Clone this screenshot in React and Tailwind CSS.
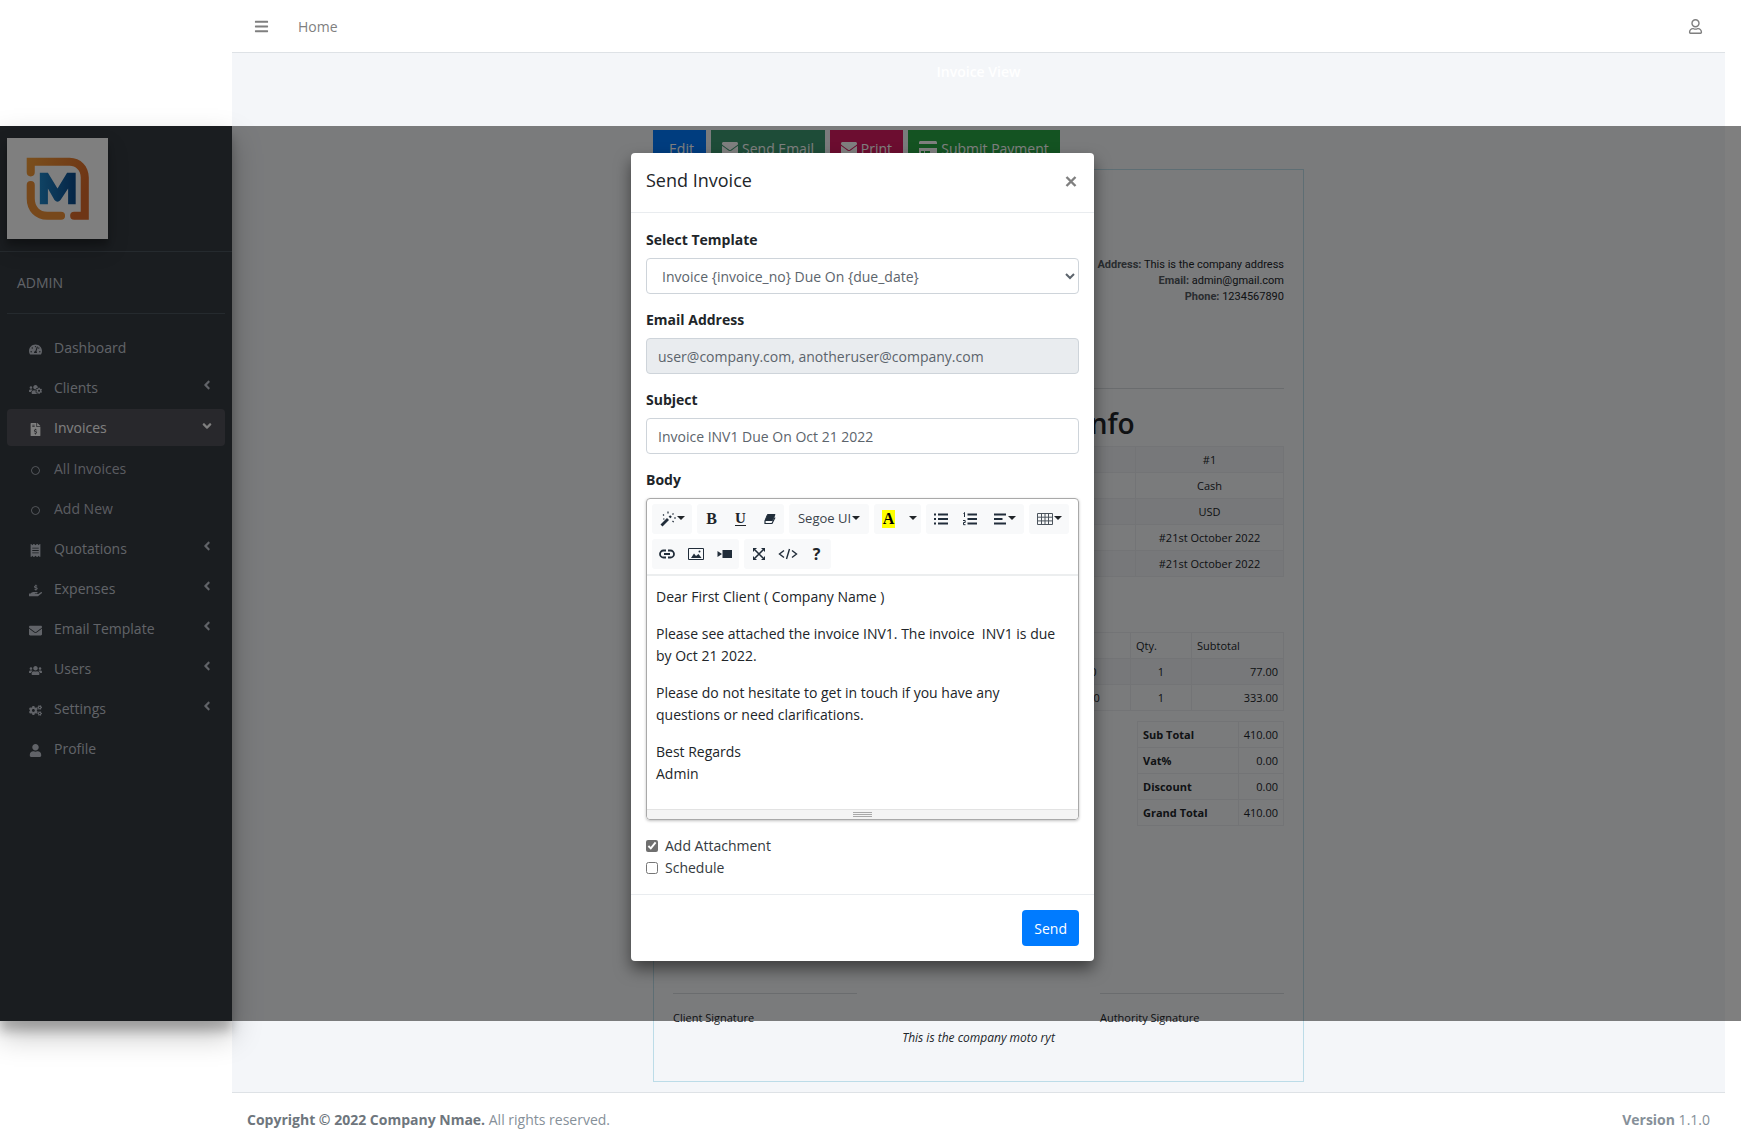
import React from "react";
import {
  FaTachometerAlt,
  FaUsersCog,
  FaFileInvoiceDollar,
  FaReceipt,
  FaHandHoldingUsd,
  FaEnvelope,
  FaUsers,
  FaCogs,
  FaUser,
  FaAngleLeft,
  FaAngleDown,
  FaBars,
  FaRegUser,
  FaRegCircle,
  FaCreditCard,
} from "react-icons/fa";

const NAV = [
  { label: "Dashboard", Icon: FaTachometerAlt },
  { label: "Clients", Icon: FaUsersCog, more: true },
  { label: "Invoices", Icon: FaFileInvoiceDollar, active: true },
  { label: "All Invoices", Icon: FaRegCircle, sub: true },
  { label: "Add New", Icon: FaRegCircle, sub: true },
  { label: "Quotations", Icon: FaReceipt, more: true },
  { label: "Expenses", Icon: FaHandHoldingUsd, more: true },
  { label: "Email Template", Icon: FaEnvelope, more: true },
  { label: "Users", Icon: FaUsers, more: true },
  { label: "Settings", Icon: FaCogs, more: true },
  { label: "Profile", Icon: FaUser },
];

function Logo() {
  return (
    <svg viewBox="0 0 100 100" className="size-[101px] bg-white shadow-[0_10px_20px_rgba(0,0,0,0.19),0_6px_6px_rgba(0,0,0,0.23)]" role="img" aria-label="Company logo">
      <defs>
        <linearGradient id="ring" x1="0" x2="1" y1="0" y2="0.4">
          <stop offset="0" stopColor="#f5a03a" />
          <stop offset="1" stopColor="#dd6a2a" />
        </linearGradient>
        <linearGradient id="mark" x1="0" x2="1">
          <stop offset="0" stopColor="#1f86c8" />
          <stop offset="1" stopColor="#0b4a8c" />
        </linearGradient>
      </defs>
      <path d="M19.500 19.500H62C73 19.500 81 28 81 39V81H66.500A4 4 0 0 1 66.500 73H73V39C73 32 68 27.500 62 27.500H27.500V34A4 4 0 0 1 19.500 34Z" fill="url(#ring)" />
      <path d="M23.500 46.500V60C23.500 70 30 77 40 77H53.500" fill="none" stroke="#ee9036" strokeWidth="8" strokeLinecap="round" />
      <path d="M39.500 65.500V34.500H47.500L57 50L66.500 34.500H75V65.500H67.500V50L60 61.500Q57 64.500 54 61.500L47.500 50V65.500Z" transform="translate(-7 0)" fill="url(#mark)" />
    </svg>
  );
}

function Sidebar() {
  return (
    <aside className="relative z-10 mt-[126px] mb-[124px] flex w-[232px] shrink-0 flex-col bg-[#343a40] shadow-[0_14px_28px_rgba(0,0,0,0.25),0_10px_10px_rgba(0,0,0,0.22)]">
      <a href="#home" className="block border-b border-[#4b545c] px-[7px] py-3">
        <Logo />
      </a>
      <div className="mx-[7px] border-b border-[#4b545c] px-[10px] py-5 text-[14px] leading-[21px] text-[#c2c7d0]">ADMIN</div>
      <nav className="mt-[15px] flex flex-col gap-[3px] px-[7px]">
        {NAV.map(({ label, Icon, more, active, sub }) => (
          <a
            key={label}
            href="#menu"
            className={
              "flex h-[37px] items-center rounded pr-[11px] pl-[17px] text-[14px] leading-[22px] " +
              (active ? "mb-px bg-[#505058] font-medium text-white" : sub ? "text-[#b4b9c2]" : "text-[#c2c7d0]")
            }
          >
            <span className="mt-1 mr-2 flex w-[22px] justify-center">
              <Icon className={sub ? "size-[9px]" : "size-[13px]"} />
            </span>
            <span className="grow">{label}</span>
            {more && <FaAngleLeft className="mb-[6px] size-[14px]" />}
            {active && <FaAngleDown className="mb-[4px] size-[14px]" />}
          </a>
        ))}
      </nav>
    </aside>
  );
}

const INFO = ["#1", "Cash", "USD", "#21st October 2022", "#21st October 2022"];
const ITEMS = ["77.00", "333.00"];
const TOTALS = [
  ["Sub Total", "410.00"],
  ["Vat%", "0.00"],
  ["Discount", "0.00"],
  ["Grand Total", "410.00"],
];
const cell = "border border-[#e6e9ed] px-[5px]";

function InvoiceCard() {
  return (
    <section className="border border-[#bcdce8] px-[19px] pt-[87px] pb-[35px] text-[11px] leading-[16px] text-[#212529]">
      <div className="text-right font-['Roboto',sans-serif]">
        <p><strong className="font-bold text-[#555b61]">Address:</strong> This is the company address</p>
        <p><strong className="font-bold text-[#555b61]">Email:</strong> admin@gmail.com</p>
        <p><strong className="font-bold text-[#555b61]">Phone:</strong> 1234567890</p>
      </div>
      <hr className="mt-[83px] border-[#d5d8dc]" />
      <h2 className="mt-[16px] text-center text-[28px] leading-[36px] font-semibold">Invoice &amp; Payment Info</h2>
      <table className="mt-[5px] w-full border-collapse text-center">
        <tbody>
          {INFO.map((value, i) => (
            <tr key={i} className="h-[26px] odd:bg-black/[0.02]">
              <td className={cell} />
              <td className={"w-[148px] " + cell}>{value}</td>
            </tr>
          ))}
        </tbody>
      </table>
      <table className="mt-[55px] w-full border-collapse">
        <thead>
          <tr className="h-[26px] text-left">
            <td className={cell} />
            <td className={"w-[96px] " + cell} />
            <th className={"w-[61px] font-medium " + cell}>Qty.</th>
            <th className={"w-[92px] font-medium " + cell}>Subtotal</th>
          </tr>
        </thead>
        <tbody>
          {ITEMS.map((price) => (
            <tr key={price} className="h-[26px] odd:bg-black/[0.02]">
              <td className={cell} />
              <td className={"text-center " + cell}>{price}</td>
              <td className={"text-center " + cell}>1</td>
              <td className={"text-right " + cell}>{price}</td>
            </tr>
          ))}
        </tbody>
      </table>
      <table className="mt-[10px] ml-auto w-[147px] border-collapse">
        <tbody>
          {TOTALS.map(([name, value]) => (
            <tr key={name} className="h-[26px]">
              <th className={"text-left font-bold " + cell}>{name}</th>
              <td className={"w-[44px] text-right " + cell}>{value}</td>
            </tr>
          ))}
        </tbody>
      </table>
      <div className="mt-[167px] flex justify-between">
        <p className="w-[184px] border-t border-[#d5d8dc] pt-[16px]">Client Signature</p>
        <p className="w-[184px] border-t border-[#d5d8dc] pt-[16px]">Authority Signature</p>
      </div>
      <p className="mt-[4px] text-center text-[12px] italic">This is the company moto ryt</p>
    </section>
  );
}

function Caret() {
  return <span className="mb-[3px] ml-px inline-block border-x-4 border-t-4 border-x-transparent border-t-[#212529]" />;
}

function Group({ children }) {
  return <div className="flex h-[30px] rounded-[3px] bg-[#f8f9fa]">{children}</div>;
}

function Tool({ label, wide, children }) {
  return (
    <button type="button" aria-label={label} className={"flex h-[30px] items-center justify-center " + (wide ? wide : "w-[29px]")}>
      {children}
    </button>
  );
}

function Glyph({ children, w = 16 }) {
  return (
    <svg width={w} height="16" viewBox={"0 0 " + w + " 16"} fill="none" stroke="#212d3a" strokeWidth="1.5">
      {children}
    </svg>
  );
}

function Toolbar() {
  return (
    <div className="flex flex-wrap gap-[5px] border-b-2 border-[#eceeef] px-[5px] pt-[5px] pb-[5px] text-[#212529]">
      <Group>
        <Tool label="Style" wide="w-[40px]">
          <Glyph>
            <path d="M1.500 14.500L8 8" strokeWidth="2.800" />
            <path d="M9.500 6.500L11 5" strokeWidth="2.400" />
            <path d="M3 3.500l1 1M8 0.500v2M4.500 8H3M13.500 2.500l-1 1M14 7h2M12.500 10l1.200 1.200" strokeWidth="1.200" />
          </Glyph>
          <Caret />
        </Tool>
      </Group>
      <Group>
        <Tool label="Bold"><span className="font-['Liberation_Serif',serif] text-[16px] leading-none font-bold">B</span></Tool>
        <Tool label="Underline"><span className="border-b border-[#212529] font-['Liberation_Serif',serif] text-[15px] leading-[13px] font-bold">U</span></Tool>
        <Tool label="Remove style">
          <Glyph>
            <path d="M5.500 3.500H13L10.500 9.500H3Z" fill="#212d3a" strokeWidth="1" />
            <path d="M3 9.500V12.500H10L13 6.500" strokeWidth="1.200" />
          </Glyph>
        </Tool>
      </Group>
      <Group>
        <Tool label="Font family" wide="w-[80px] text-[13px] text-[#3c444c]">
          Segoe UI
          <Caret />
        </Tool>
      </Group>
      <Group>
        <Tool label="Text colour"><span className="bg-[#ffff00] px-[1px] font-['Liberation_Serif',serif] text-[16px] leading-[18px] font-bold text-black">A</span></Tool>
        <Tool label="More colours" wide="w-[18px]"><Caret /></Tool>
      </Group>
      <Group>
        <Tool label="Bulleted list">
          <Glyph>
            <path d="M5 3.500H15M5 8H15M5 12.500H15" strokeWidth="2" />
            <path d="M1 3.500H3M1 8H3M1 12.500H3" strokeWidth="2" />
          </Glyph>
        </Tool>
        <Tool label="Numbered list">
          <Glyph>
            <path d="M5.500 3.500H15M5.500 8H15M5.500 12.500H15" strokeWidth="2" />
            <path d="M1.500 2.500L2.500 1.500V6M1 9.500H3.200V11.500H1.500V13.700H3.500" strokeWidth="1" />
          </Glyph>
        </Tool>
        <Tool label="Paragraph" wide="w-[40px]">
          <Glyph w={14}>
            <path d="M1 3.500H13M1 8H9.500M1 12.500H13" strokeWidth="2" />
          </Glyph>
          <Caret />
        </Tool>
      </Group>
      <Group>
        <Tool label="Table" wide="w-[40px]">
          <Glyph>
            <path d="M0.500 2.500H15.500V13.500H0.500ZM0.500 6.200H15.500M0.500 9.900H15.500M4.500 2.500V13.500M8 2.500V13.500M11.500 2.500V13.500" stroke="#4c545d" strokeWidth="1" />
          </Glyph>
          <Caret />
        </Tool>
      </Group>
      <Group>
        <Tool label="Link">
          <Glyph>
            <path d="M7 4.500H4.500A3.500 3.500 0 0 0 4.500 11.500H7M9 4.500H11.500A3.500 3.500 0 0 1 11.500 11.500H9M5 8H11" strokeWidth="1.800" />
          </Glyph>
        </Tool>
        <Tool label="Picture">
          <Glyph>
            <path d="M0.500 2.500H15.500V13.500H0.500Z" strokeWidth="1" />
            <path d="M3 12L6 7.500L8 10L10.500 8L13.500 12Z" fill="#212d3a" stroke="none" />
            <circle cx="11.500" cy="5.500" r="1" fill="#212d3a" stroke="none" />
          </Glyph>
        </Tool>
        <Tool label="Video">
          <Glyph>
            <path d="M5.500 4H15V12H5.500ZM0.500 5L5 8L0.500 11Z" fill="#212d3a" stroke="none" />
          </Glyph>
        </Tool>
      </Group>
      <Group>
        <Tool label="Full screen">
          <Glyph>
            <path d="M4 4L12 12M12 4L4 12" strokeWidth="1.600" />
            <path d="M2 2H6L2 6ZM14 2V6L10 2ZM2 14V10L6 14ZM14 14H10L14 10Z" fill="#212d3a" stroke="none" />
          </Glyph>
        </Tool>
        <Tool label="Code view">
          <Glyph w={20}>
            <path d="M6 4.500L1.500 8L6 11.500M14 4.500L18.500 8L14 11.500M11.500 3L8.500 13" strokeWidth="1.400" />
          </Glyph>
        </Tool>
        <Tool label="Help"><span className="text-[16px] leading-none font-bold">?</span></Tool>
      </Group>
    </div>
  );
}

const labelCls = "block text-[14px] leading-[22px] font-bold text-[#212529]";
const fieldCls = "mt-[7px] mb-[15px] block h-[36px] w-full rounded border border-[#ced4da] text-[14px] text-[#5c646c]";

function SendInvoiceModal() {
  return (
    <div role="dialog" aria-labelledby="send-title" className="mt-[27px] w-[463px] self-start rounded-[4px] bg-white text-[14px] text-[#212529] shadow-[0_8px_16px_rgba(0,0,0,0.5)]">
      <header className="flex items-start justify-between border-b border-[#e9ecef] px-[15px] pt-[13px] pb-[18px]">
        <h1 id="send-title" className="text-[18px] leading-[28px] font-medium">Send Invoice</h1>
        <button type="button" aria-label="Close" className="mt-[8px] mr-[2px]">
          <svg width="12" height="15" viewBox="0 0 12 15" stroke="#7f7f7f" strokeWidth="2.400"><path d="M1.500 3L10.500 12M10.500 3L1.500 12" /></svg>
        </button>
      </header>
      <form className="px-[15px] pt-[16px] pb-[15px]" onSubmit={(e) => e.preventDefault()}>
        <label htmlFor="template" className={labelCls}>Select Template</label>
        <select id="template" className={fieldCls + " bg-white pr-[1px] pl-[11px]"}>
          <option>{"Invoice {invoice_no} Due On {due_date}"}</option>
        </select>
        <label htmlFor="email" className={labelCls}>Email Address</label>
        <input id="email" readOnly defaultValue="user@company.com, anotheruser@company.com" className={fieldCls + " bg-[#e9ecef] px-[11px]"} />
        <label htmlFor="subject" className={labelCls}>Subject</label>
        <input id="subject" defaultValue="Invoice INV1 Due On Oct 21 2022" className={fieldCls + " bg-white px-[11px]"} />
        <span className={labelCls}>Body</span>
        <div className="mt-[7px] rounded border border-[#a9a9a9] shadow-[0_1px_3px_rgba(0,0,0,0.25)]">
          <Toolbar />
          <div role="textbox" aria-label="Body" className="flex flex-col gap-[15px] pt-[10px] pr-[16px] pb-[24px] pl-[9px] leading-[22px] text-[#212529]">
            <p>Dear First Client ( Company Name )</p>
            <p>Please see attached the invoice INV1. The invoice&nbsp; INV1 is due by Oct 21 2022.</p>
            <p>Please do not hesitate to get in touch if you have any questions or need clarifications.</p>
            <p>Best Regards<br />Admin</p>
          </div>
          <div className="flex h-[10px] flex-col items-center justify-center gap-px rounded-b border-t border-[#e3e3e3] bg-[#f4f4f4]">
            <i className="h-px w-[19px] bg-[#a9a9a9]" />
            <i className="h-px w-[19px] bg-[#a9a9a9]" />
            <i className="h-px w-[19px] bg-[#a9a9a9]" />
          </div>
        </div>
        <div className="mt-[15px] flex flex-col text-[#343a40]">
          <label className="flex items-center gap-[7px] leading-[22px]">
            <input type="checkbox" defaultChecked className="size-[12px] accent-[#6f6f6f]" />
            Add Attachment
          </label>
          <label className="flex items-center gap-[7px] leading-[22px]">
            <input type="checkbox" className="size-[12px]" />
            Schedule
          </label>
        </div>
      </form>
      <footer className="flex justify-end border-t border-[#e9ecef] p-[15px]">
        <button type="button" className="h-[36px] rounded bg-[#007bff] px-[12px] text-[14px] font-medium text-white">Send</button>
      </footer>
    </div>
  );
}

export default function App() {
  return (
    <div className="relative flex min-h-screen bg-white pr-4 font-['Open_Sans','Noto_Sans',sans-serif] text-[14px]">
      <Sidebar />
      <div className="flex min-w-0 grow flex-col">
        <header className="flex h-[53px] items-center border-b border-[#dee2e6] px-[22px] text-[#7f7f7f]">
          <button type="button" aria-label="Toggle menu"><FaBars className="size-[15px]" /></button>
          <a href="#home" className="ml-[29px]">Home</a>
          <button type="button" aria-label="Account" className="ml-auto"><FaRegUser className="size-[15px]" /></button>
        </header>
        <main className="flex grow flex-col items-center bg-[#f4f6f9] pb-[10px]">
          <h1 className="mt-[8px] text-[14px] leading-[22px] font-semibold text-white">Invoice View</h1>
          <div className="mt-[47px] w-[651px]">
            <div className="flex gap-[5px] text-[14px] text-white">
              <button type="button" className="h-[36px] w-[53px] bg-[#007bff] pl-1">Edit</button>
              <button type="button" className="flex h-[36px] w-[114px] items-center justify-center gap-[4px] bg-[#3d9970]"><FaEnvelope className="size-4" />Send Email</button>
              <button type="button" className="flex h-[36px] w-[73px] items-center justify-center gap-[4px] bg-[#d81b60]"><FaEnvelope className="size-4" />Print</button>
              <button type="button" className="flex h-[36px] w-[152px] items-center justify-center gap-[4px] bg-[#28a745]"><FaCreditCard className="size-[18px]" />Submit Payment</button>
            </div>
            <div className="mt-[3px]">
              <InvoiceCard />
            </div>
          </div>
        </main>
        <footer className="flex h-[53px] items-center justify-between border-t border-[#dee2e6] px-[15px] text-[#869099]">
          <p><strong className="font-bold text-[#6e767d]">Copyright © 2022 Company Nmae.</strong> All rights reserved.</p>
          <p><b>Version</b> 1.1.0</p>
        </footer>
      </div>
      <div className="absolute inset-x-0 top-[126px] bottom-[124px] z-20 flex justify-center bg-black/50 pr-4">
        <SendInvoiceModal />
      </div>
    </div>
  );
}
